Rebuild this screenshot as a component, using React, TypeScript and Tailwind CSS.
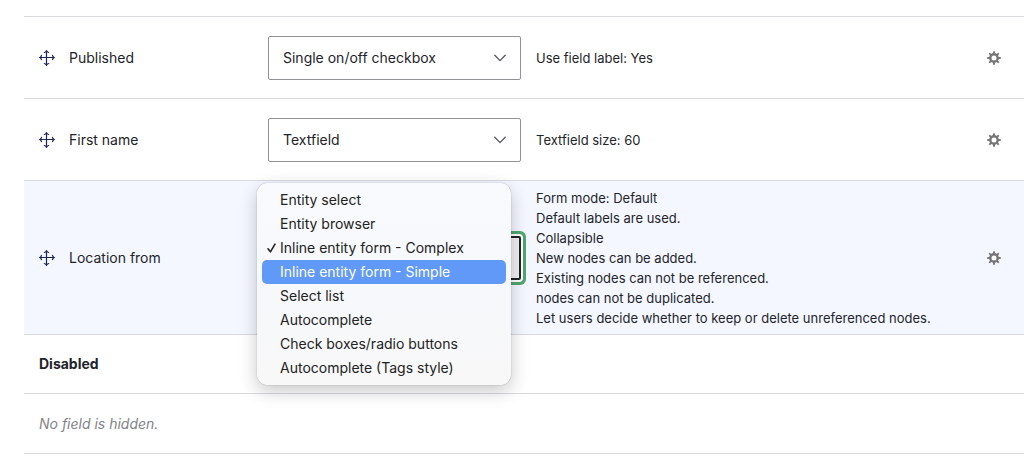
import React from 'react'

interface FieldRow {
    id: string
    name: string
    widget: string
    summary: string[]
    open?: boolean
}

const WIDGETS = [
    'Entity select',
    'Entity browser',
    'Inline entity form - Complex',
    'Inline entity form - Simple',
    'Select list',
    'Autocomplete',
    'Check boxes/radio buttons',
    'Autocomplete (Tags style)',
]

const HIGHLIGHTED_WIDGET = 'Inline entity form - Simple'

const FIELDS: FieldRow[] = [
    { id: 'status', name: 'Published', widget: 'Single on/off checkbox', summary: ['Use field label: Yes'] },
    { id: 'first-name', name: 'First name', widget: 'Textfield', summary: ['Textfield size: 60'] },
    {
        id: 'location-from',
        name: 'Location from',
        widget: 'Inline entity form - Complex',
        summary: [
            'Form mode: Default',
            'Default labels are used.',
            'Collapsible',
            'New nodes can be added.',
            'Existing nodes can not be referenced.',
            'nodes can not be duplicated.',
            'Let users decide whether to keep or delete unreferenced nodes.',
        ],
        open: true,
    },
]

const MoveIcon = () => (
    <svg
        className="size-4"
        viewBox="0 0 16 16"
        fill="none"
        stroke="#1b2559"
        strokeWidth="1.2"
        strokeLinecap="round"
        strokeLinejoin="round"
        aria-hidden="true"
    >
        <path d="M7.5 .8v14.4M.8 7.5h14.4" />
        <path d="M5.3 2.5Q6.9 2.2 7.5 .8Q8.1 2.2 9.7 2.5" />
        <path d="M5.3 13.5Q6.9 13.8 7.5 15.2Q8.1 13.8 9.7 13.5" />
        <path d="M2.5 5.3Q2.2 6.9 .8 7.5Q2.2 8.1 2.5 9.7" />
        <path d="M13.5 5.3Q13.8 6.9 15.2 7.5Q13.8 8.1 13.5 9.7" />
    </svg>
)

const GearIcon = () => (
    <svg className="size-[14px]" viewBox="0 0 14 14" aria-hidden="true">
        <g fill="#777">
            {[0, 45, 90, 135].map((angle) => (
                <rect key={angle} x="6" y="0.2" width="2" height="13.6" rx="0.6" transform={`rotate(${angle} 7 7)`} />
            ))}
        </g>
        <circle cx="7" cy="7" r="3.7" fill="#fff" stroke="#777" strokeWidth="2.4" />
    </svg>
)

const ChevronIcon = () => (
    <svg
        className="pointer-events-none absolute right-[15px] top-1/2 h-2 w-3 -translate-y-1/2"
        viewBox="0 0 12 8"
        fill="none"
        stroke="#55565b"
        strokeWidth="1.3"
        strokeLinecap="round"
        strokeLinejoin="round"
        aria-hidden="true"
    >
        <path d="M.8 1.2L6 6.6L11.2 1.2" />
    </svg>
)

const CheckIcon = () => (
    <svg
        className="h-[10px] w-[9px]"
        viewBox="0 0 9 10"
        fill="none"
        stroke="#222"
        strokeWidth="1.6"
        strokeLinecap="round"
        strokeLinejoin="round"
        aria-hidden="true"
    >
        <path d="M1 5.8L3.4 8.8L8 1.2" />
    </svg>
)

const WidgetMenu: React.FC<{ selected: string }> = ({ selected }) => (
    <ul
        role="listbox"
        aria-label="Widget"
        className="absolute -left-[11px] -top-[53px] z-10 w-[254px] rounded-[11px] bg-linear-to-b from-[#f9fafd] via-[#f6f8fb] to-[#f8f8f8] p-[5px] shadow-[0_0_1px_rgba(0,0,0,0.5),0_6px_18px_rgba(0,0,0,0.22)]"
    >
        {WIDGETS.map((widget) => (
            <li
                key={widget}
                role="option"
                aria-selected={widget === selected}
                className={
                    widget === HIGHLIGHTED_WIDGET
                        ? 'flex h-6 items-center rounded-[5px] bg-[#6199f8] text-white'
                        : 'flex h-6 items-center text-[#222]'
                }
            >
                <span className="flex w-[18px] shrink-0 justify-center">{widget === selected && <CheckIcon />}</span>
                <span className="whitespace-nowrap">{widget}</span>
            </li>
        ))}
    </ul>
)

const WidgetSelect: React.FC<{ field: FieldRow }> = ({ field }) => (
    <div className="relative">
        <select
            id={field.id}
            defaultValue={field.widget}
            className={
                field.open
                    ? 'block h-11 w-full appearance-none rounded-[2px] border-2 border-[#232429] bg-[#f0f0f2] px-[13px] shadow-[0_0_0_2px_#fff,0_0_0_5px_#4fa76c] outline-none'
                    : 'block h-11 w-full appearance-none rounded-[2px] border border-[#919297] bg-white px-[14px] outline-none'
            }
        >
            {field.open ? WIDGETS.map((widget) => <option key={widget}>{widget}</option>) : <option>{field.widget}</option>}
        </select>
        {field.open ? <WidgetMenu selected={field.widget} /> : <ChevronIcon />}
    </div>
)

const App: React.FC = () => {
    return (
        <main className="bg-white pl-6 pt-4 font-['Inter','Liberation_Sans',sans-serif] text-[14px] leading-6 text-[#232429]">
            <table className="w-full table-fixed border-collapse border-t border-[#d9dae0]">
                <colgroup>
                    <col className="w-[244px]" />
                    <col className="w-[253px]" />
                    <col />
                    <col className="w-[60px]" />
                </colgroup>
                <tbody>
                    {FIELDS.map((field) => (
                        <tr
                            key={field.id}
                            className={field.open ? 'border-b border-[#d9dae0] bg-[#f4f7ff]' : 'border-b border-[#d9dae0]'}
                        >
                            <td className="h-[82px] pl-[15px]">
                                <div className="flex items-center gap-[14px]">
                                    <button type="button" aria-label={`Move ${field.name}`} className="cursor-move">
                                        <MoveIcon />
                                    </button>
                                    <label htmlFor={field.id}>{field.name}</label>
                                </div>
                            </td>
                            <td>
                                <WidgetSelect field={field} />
                            </td>
                            <td className="pb-[6px] pl-[15px] pt-[7px] text-[13px] leading-5">
                                {field.summary.map((line) => (
                                    <div key={line}>{line}</div>
                                ))}
                            </td>
                            <td>
                                <button type="button" aria-label={`Edit ${field.name}`} className="ml-[23px] block">
                                    <GearIcon />
                                </button>
                            </td>
                        </tr>
                    ))}
                    <tr className="border-b border-[#d9dae0]">
                        <th colSpan={4} className="h-[59px] pl-[15px] text-left font-bold">
                            Disabled
                        </th>
                    </tr>
                    <tr className="border-b border-[#d9dae0]">
                        <td colSpan={4} className="h-[60px] pl-[15px] italic text-[#828388]">
                            No field is hidden.
                        </td>
                    </tr>
                </tbody>
            </table>
        </main>
    )
}

export default App
